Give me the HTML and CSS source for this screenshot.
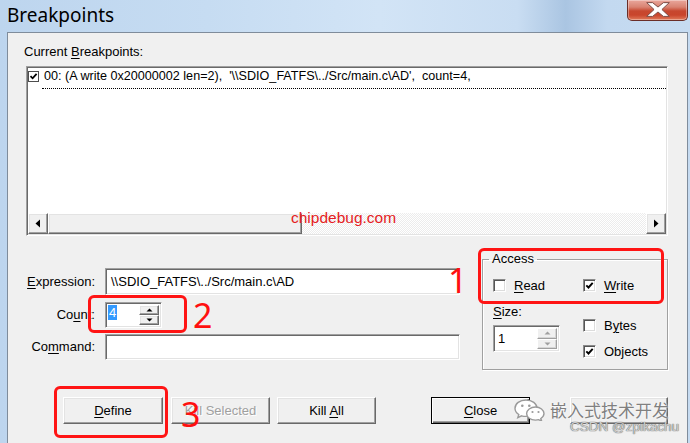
FILE: index.html
```html
<!DOCTYPE html>
<html>
<head>
<meta charset="utf-8">
<title>Breakpoints</title>
<link rel="stylesheet" href="styles.css">
</head>
<body>
<div class="window">
  <div class="titlebar">
    <div class="title">Breakpoints</div>
    <div class="closebtn">
      <svg width="60" height="21" viewBox="0 0 60 21"><polygon points="19,2.5 25,2.5 30.5,7 36,2.5 42,2.5 34.5,9.5 42,16.5 36,16.5 30.5,12 25,16.5 19,16.5 26.5,9.5" fill="#fff" stroke="#7a4a44" stroke-width="1"/></svg>
    </div>
  </div>
  <div class="frame">
    <div class="client">
      <div class="caption">Current <u>B</u>reakpoints:</div>
      <div class="listbox">
        <div class="items">
          <div class="item">
            <span class="lcb"><svg width="9" height="9" viewBox="0 0 9 9"><path d="M1.5 4.2 L3.6 6.3 L7.6 1.8" fill="none" stroke="#000" stroke-width="1.8"/></svg></span>
            <span class="itemtext">00: (A write 0x20000002 len=2),  '\\SDIO_FATFS\../Src/main.c\AD',  count=4,</span>
          </div>
        </div>
        <div class="hscroll">
          <div class="sbtn"><svg width="8" height="9" viewBox="0 0 8 9"><polygon points="6,0.5 6,8.5 1.5,4.5" fill="#000"/></svg></div>
          <div class="track"><div class="thumb"></div></div>
          <div class="sbtn"><svg width="8" height="9" viewBox="0 0 8 9"><polygon points="2,0.5 2,8.5 6.5,4.5" fill="#000"/></svg></div>
        </div>
      </div>

      <div class="lower">
        <div class="fields">
          <div class="frow">
            <span class="flabel"><u>E</u>xpression:</span>
            <div class="edit wide">\\SDIO_FATFS\../Src/main.c\AD</div>
          </div>
          <div class="frow r2">
            <span class="flabel">Co<u>u</u>nt:</span>
            <div class="spin count">
              <div class="val"><span class="sel">4</span></div>
              <div class="spinbtns">
                <div class="spb"><svg width="7" height="4" viewBox="0 0 7 4"><polygon points="0.5,3.5 6.5,3.5 3.5,0.5" fill="#000"/></svg></div>
                <div class="spb"><svg width="7" height="4" viewBox="0 0 7 4"><polygon points="0.5,0.5 6.5,0.5 3.5,3.5" fill="#000"/></svg></div>
              </div>
            </div>
          </div>
          <div class="frow r3">
            <span class="flabel">Co<u>m</u>mand:</span>
            <div class="edit wide cmd"></div>
          </div>
        </div>

        <fieldset class="group">
          <legend>Access</legend>
          <div class="grow1">
            <div class="col1">
              <div class="chk"><span class="box"></span><span><u>R</u>ead</span></div>
            </div>
            <div class="chk"><span class="box"><svg width="9" height="9" viewBox="0 0 9 9"><path d="M1.3 4.3 L3.5 6.5 L7.7 1.8" fill="none" stroke="#000" stroke-width="1.9"/></svg></span><span><u>W</u>rite</span></div>
          </div>
          <div class="grow2">
            <div class="col1">
              <div class="sizelabel"><u>S</u>ize:</div>
              <div class="spin size">
                <div class="val">1</div>
                <div class="spinbtns">
                  <div class="spb dis"><svg width="7" height="4" viewBox="0 0 7 4"><polygon points="0.5,3.5 6.5,3.5 3.5,0.5" fill="#a0a0a0"/></svg></div>
                  <div class="spb dis"><svg width="7" height="4" viewBox="0 0 7 4"><polygon points="0.5,0.5 6.5,0.5 3.5,3.5" fill="#a0a0a0"/></svg></div>
                </div>
              </div>
            </div>
            <div class="col2">
              <div class="chk bytes"><span class="box"></span><span>B<u>y</u>tes</span></div>
              <div class="chk objects"><span class="box"><svg width="9" height="9" viewBox="0 0 9 9"><path d="M1.3 4.3 L3.5 6.5 L7.7 1.8" fill="none" stroke="#000" stroke-width="1.9"/></svg></span><span>Objects</span></div>
            </div>
          </div>
        </fieldset>
      </div>

      <div class="buttons">
        <div class="btn b-define"><span><u>D</u>efine</span></div>
        <div class="btn b-killsel disabled"><span>Kill Selected</span></div>
        <div class="btn b-killall"><span>Kill <u>A</u>ll</span></div>
        <div class="btn b-close default"><span><u>C</u>lose</span></div>
        <div class="btn b-help"></div>
      </div>
    </div>
  </div>

  <!-- annotation overlays -->
  <div class="mark mark1"></div>
  <div class="mark mark2"></div>
  <div class="mark mark3"></div>
  <div class="num num1">1</div>
  <div class="num num2">2</div>
  <div class="num num3">3</div>
  <div class="site">chipdebug.com</div>
  <div class="wm">
    <svg class="wechat" width="31" height="22" viewBox="0 0 31 22">
      <path d="M12 1 C5.8 1 1 4.7 1 9.2 C1 11.8 2.5 14 4.8 15.5 L3.8 18.6 L7.6 16.8 C9 17.2 10.4 17.4 12 17.4 C18.1 17.4 23 13.7 23 9.2 C23 4.7 18.1 1 12 1 Z" fill="#fff" stroke="#9a9a9a" stroke-width="1.4"/>
      <path d="M21.5 8 C16.5 8 12.6 11 12.6 14.6 C12.6 18.2 16.5 21.1 21.5 21.1 C22.6 21.1 23.6 21 24.5 20.7 L27.6 22 L26.8 19.5 C28.7 18.3 30 16.6 30 14.6 C30 11 26.2 8 21.5 8 Z" fill="#fff" stroke="#9a9a9a" stroke-width="1.4"/>
      <circle cx="8.3" cy="6.8" r="1.3" fill="#9a9a9a"/>
      <circle cx="15.3" cy="6.8" r="1.3" fill="#9a9a9a"/>
      <circle cx="18.5" cy="13" r="1.1" fill="#9a9a9a"/>
      <circle cx="24.5" cy="13" r="1.1" fill="#9a9a9a"/>
    </svg>
    <span class="wmtext">嵌入式技术开发</span>
  </div>
  <div class="csdn">CSDN @zpikachu</div>
</div>
</body>
</html>
```

FILE: styles.css
```css
* { box-sizing: border-box; }
html, body { margin: 0; padding: 0; }
body {
  width: 690px;
  height: 443px;
  overflow: hidden;
  font-family: "Liberation Sans", Arial, sans-serif;
  font-size: 13px;
  color: #000;
  background: #c2d8ef;
}
u { text-decoration: underline; text-underline-offset: 2px; }

.window {
  position: relative;
  width: 690px;
  height: 443px;
  display: flex;
  flex-direction: column;
  background: linear-gradient(90deg, #bdd5ee 0%, #c6dcf2 30%, #d2e4f6 55%, #c9ddf2 75%, #aac5e2 82%, #c3d9f0 88%, #c6dbf1 100%);
}

.titlebar {
  height: 32px;
  display: flex;
  justify-content: space-between;
  align-items: flex-start;
}
.title {
  font-family: "Noto Sans", "Open Sans", sans-serif;
  font-size: 19px;
  line-height: 26px;
  margin-top: 2px;
  padding-left: 7px;
  color: #000;
}
.closebtn {
  width: 61px;
  height: 21px;
  margin-right: 2px;
  border: 1px solid #6a2e28;
  border-top: none;
  border-radius: 0 0 5px 5px;
  background: linear-gradient(180deg, #e9a79c 0%, #d98372 35%, #c7472f 55%, #c9452c 75%, #e07a5a 100%);
  box-shadow: inset 0 0 0 1px rgba(255,255,255,0.35);
  display: flex;
}

.frame {
  flex: 1;
  display: flex;
  padding: 0 2px 0 7px;
}
.client {
  flex: 1;
  background: #f0f0f0;
  border-top: 1px solid #7f8c9b;
  border-left: 1px solid #7f8c9b;
  border-right: 1px solid #7f8c9b;
}

.caption {
  margin: 11px 0 0 16px;
  line-height: 16px;
}

/* list box */
.listbox {
  margin: 6px 0 0 18px;
  width: 642px;
  height: 170px;
  display: flex;
  flex-direction: column;
  background: #fff;
  border: 1px solid;
  border-color: #a0a0a0 #fff #fff #a0a0a0;
  box-shadow: inset 1px 1px 0 #696969, inset -1px -1px 0 #e3e3e3;
  padding: 1px;
}
.items { flex: 1; }
.item {
  display: flex;
  align-items: flex-start;
}
.lcb {
  width: 11px;
  height: 11px;
  margin-top: 3px;
  border: 1px solid #4d4d4d;
  background: #fff;
  display: flex;
  align-items: center;
  justify-content: center;
}
.itemtext {
  flex: 1;
  margin-left: 3px;
  padding: 1px 0 4px 2px;
  font-size: 12.6px;
  line-height: 15px;
  border-bottom: 1px dotted #000;
  white-space: pre;
}

.hscroll {
  height: 21px;
  display: flex;
}
.sbtn, .thumb, .spb, .btn {
  background: #f0f0f0;
  border: 1px solid;
  border-color: #fff #696969 #696969 #fff;
  box-shadow: inset -1px -1px 0 #a0a0a0, inset 1px 1px 0 #e3e3e3;
}
.sbtn {
  width: 20px;
  display: flex;
  align-items: center;
  justify-content: center;
}
.track {
  flex: 1;
  display: flex;
  background: repeating-conic-gradient(#ffffff 0 25%, #ececec 0 50%) 0 0 / 2px 2px;
}
.thumb { width: 254px; }

/* lower form */
.lower {
  display: flex;
  align-items: flex-start;
  margin-top: 15px;
}
.fields {
  width: 452px;
  padding-top: 17px;
}
.frow {
  display: flex;
  align-items: center;
}
.frow.r2 { margin-top: 7px; }
.frow.r3 { margin-top: 6px; }
.flabel {
  width: 87px;
  margin-right: 10px;
  text-align: right;
  white-space: nowrap;
  line-height: 16px;
}
.edit, .spin {
  background: #fff;
  border: 1px solid;
  border-color: #a0a0a0 #fff #fff #a0a0a0;
  box-shadow: inset 1px 1px 0 #696969, inset -1px -1px 0 #e3e3e3;
}
.edit {
  height: 27px;
  padding: 0 0 0 5px;
  line-height: 25px;
  white-space: nowrap;
}
.edit.wide { width: 355px; }
.edit.cmd { height: 26px; }

.spin {
  display: flex;
  padding: 2px 2px 2px 2px;
}
.spin.count { width: 57px; height: 26px; }
.spin.size { width: 67px; height: 27px; margin-top: 5px; }
.spin .val {
  flex: 1;
  line-height: 15px;
  padding-left: 0;
}
.spin.size .val { padding-left: 2px; padding-top: 3px; }
.sel {
  display: inline-block;
  background: #3399ff;
  color: #fff;
  padding: 0 1px;
  line-height: 15px;
}
.spinbtns {
  width: 20px;
  display: flex;
  flex-direction: column;
}
.spb {
  flex: 1;
  display: flex;
  align-items: center;
  justify-content: center;
}
.spb.dis { border-color: #fff #a0a0a0 #a0a0a0 #fff; box-shadow: inset -1px -1px 0 #d6d6d6; }

/* group box */
.group {
  margin: 0 0 0 22px;
  width: 186px;
  padding: 0 0 10px 10px;
  border: 1px solid #a0a0a0;
  box-shadow: inset 1px 1px 0 #fff, 1px 1px 0 #fff;
  min-width: 0;
}
.group legend {
  padding: 0 3px;
  margin-left: -4px;
  line-height: 16px;
}
.grow1 {
  display: flex;
  margin-top: 11px;
}
.col1 { width: 90px; }
.chk {
  display: flex;
  align-items: center;
  height: 15px;
  line-height: 15px;
  white-space: nowrap;
}
.box {
  width: 13px;
  height: 13px;
  margin-right: 8px;
  background: #fff;
  border: 1px solid;
  border-color: #8a8a8a #fff #fff #8a8a8a;
  box-shadow: inset 1px 1px 0 #555, inset -1px -1px 0 #dcdcdc;
  display: flex;
  align-items: center;
  justify-content: center;
}
.grow2 {
  display: flex;
  margin-top: 11px;
}
.sizelabel { line-height: 16px; }
.chk.bytes { margin-top: 14px; }
.chk.objects { margin-top: 11px; }

/* buttons */
.buttons {
  display: flex;
  margin: 27px 0 0 55px;
}
.btn {
  width: 99px;
  height: 27px;
  display: flex;
  align-items: center;
  justify-content: center;
  line-height: 15px;
  white-space: nowrap;
}
.b-define { width: 100px; }
.b-killsel { margin-left: 8px; }
.b-killall { margin-left: 7px; }
.b-close { margin-left: 55px; }
.b-help { margin-left: 40px; width: 98px; }
.btn.disabled { color: #a0a0a0; text-shadow: 1px 1px 0 #fff; }
.btn.default {
  border: 1px solid #000;
  box-shadow: inset 1px 1px 0 #fff, inset -1px -1px 0 #696969, inset -2px -2px 0 #a0a0a0;
}

/* annotation overlays */
.mark {
  position: absolute;
  border: 3px solid #ff1414;
  border-radius: 6px;
}
.mark1 { left: 478px; top: 248px; width: 186px; height: 56px; }
.mark2 { left: 88px; top: 295px; width: 99px; height: 38px; }
.mark3 { left: 54px; top: 386px; width: 114px; height: 52px; }
.num {
  position: absolute;
  font-family: "Noto Sans", "Liberation Sans", sans-serif;
  font-size: 34px;
  line-height: 34px;
  color: #ff1010;
}
.num1 { left: 448px; top: 263px; }
.num2 { left: 193px; top: 298px; }
.num3 { left: 181px; top: 397px; }
.site {
  position: absolute;
  left: 291px;
  top: 209px;
  font-family: "Liberation Sans", sans-serif;
  font-size: 15.5px;
  line-height: 18px;
  color: #e51c23;
}
.wm {
  position: absolute;
  left: 514px;
  top: 399px;
  display: flex;
  align-items: center;
}
.wechat { margin-right: 5px; }
.wmtext {
  font-family: "Noto Sans CJK SC", sans-serif;
  font-size: 17px;
  line-height: 22px;
  color: #808080;
  text-shadow: 0 0 2px #fff, 0 0 1px #fff;
}
.csdn {
  position: absolute;
  left: 570px;
  top: 419px;
  font-family: "Liberation Sans", sans-serif;
  font-size: 13.5px;
  line-height: 16px;
  color: #d0d0d0;
  text-shadow: 0 0 1px #666, 0 0 1px #666;
}
```
